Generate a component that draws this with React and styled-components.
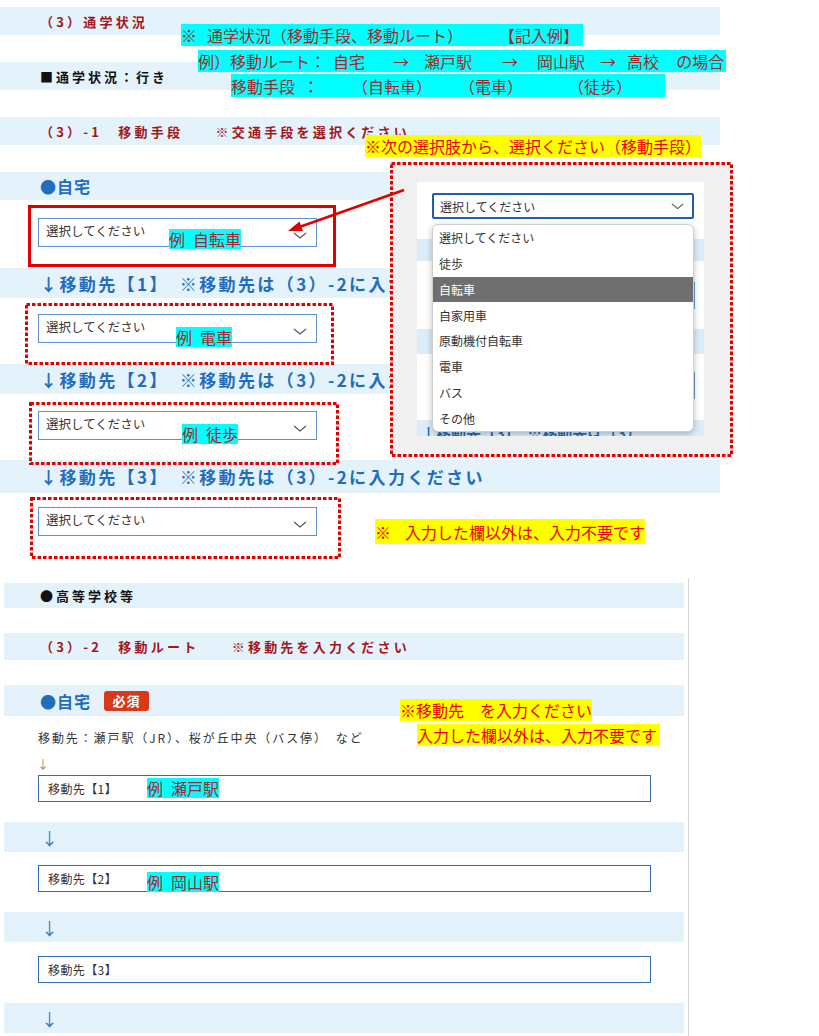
import styled, { createGlobalStyle } from "styled-components";

const GlobalStyle = createGlobalStyle`
  * { box-sizing: border-box; }
  body {
    margin: 0;
    background: #fff;
    font-family: "Noto Sans CJK JP", "Noto Sans", sans-serif;
    color: #333;
  }
`;

const Chevron = ({ w = 14 }) => (
  <svg width={w} height={w / 2} viewBox="0 0 14 7" fill="none">
    <path d="M1 1l6 5 6-5" stroke="#555" strokeWidth="1.2" />
  </svg>
);

// red frame drawn as square dashes like the annotated screenshot
const Frame = ({ x, y, w, h, solid }) => (
  <FrameBox $x={x} $y={y} $w={w} $h={h}>
    <svg width={w} height={h}>
      <rect
        x="1.5"
        y="1.5"
        width={w - 3}
        height={h - 3}
        fill="none"
        stroke="#e00000"
        strokeWidth="3"
        strokeDasharray={solid ? "none" : "3.5 2"}
      />
    </svg>
  </FrameBox>
);

const OPTIONS = ["選択してください", "徒歩", "自転車", "自家用車", "原動機付自転車", "電車", "バス", "その他"];

const App = () => {
  return (
    <Page>
      <GlobalStyle />

      <TopForm>
        <Band>
          <RedTitle>（3）通学状況</RedTitle>
        </Band>
        <Band $mt={27}>
          <PlainTitle>■通学状況：行き</PlainTitle>
        </Band>
        <Band $mt={27}>
          <RedTitle>（3）-1　移動手段　　※交通手段を選択ください</RedTitle>
        </Band>
        <Band $mt={27}>
          <BlueTitle>●自宅</BlueTitle>
        </Band>
        <SelectRow $pt={18} $pb={21}>
          <SelectBox>
            選択してください
            <Chevron />
          </SelectBox>
        </SelectRow>
        <Band $h={30}>
          <BlueTitle $wide>↓移動先【1】　※移動先は（3）-2に入力ください</BlueTitle>
        </Band>
        <SelectRow $pt={16} $pb={21}>
          <SelectBox>
            選択してください
            <Chevron />
          </SelectBox>
        </SelectRow>
        <Band $h={30}>
          <BlueTitle $wide>↓移動先【2】　※移動先は（3）-2に入力ください</BlueTitle>
        </Band>
        <SelectRow $pt={17} $pb={20}>
          <SelectBox>
            選択してください
            <Chevron />
          </SelectBox>
        </SelectRow>
        <Band $h={33}>
          <BlueTitle $wide>↓移動先【3】　※移動先は（3）-2に入力ください</BlueTitle>
        </Band>
        <SelectRow $pt={14} $pb={42}>
          <SelectBox>
            選択してください
            <Chevron />
          </SelectBox>
        </SelectRow>
      </TopForm>

      <LowerForm>
        <Band $h={25} $pl={36}>
          <PlainTitle>●高等学校等</PlainTitle>
        </Band>
        <Band $h={27} $mt={25} $pl={36}>
          <RedTitle>（3）-2　移動ルート　　※移動先を入力ください</RedTitle>
        </Band>
        <Band $h={31} $mt={25} $pl={36}>
          <BlueTitle>●自宅</BlueTitle>
          <Badge>必須</Badge>
        </Band>
        <Hint>移動先：瀬戸駅（JR）、桜が丘中央（バス停）　など</Hint>
        <SmallArrow>↓</SmallArrow>
        <RouteInput $mt={4}>移動先【1】</RouteInput>
        <ArrowBand $mt={20}>↓</ArrowBand>
        <RouteInput $mt={13}>移動先【2】</RouteInput>
        <ArrowBand $mt={20}>↓</ArrowBand>
        <RouteInput $mt={14}>移動先【3】</RouteInput>
        <ArrowBand $mt={20}>↓</ArrowBand>
      </LowerForm>

      <Popup>
        <InnerPanel>
          <PopSelect>
            選択してください
            <Chevron w={13} />
          </PopSelect>
          <GhostBand $mt={20} $h={22}>）</GhostBand>
          <GhostSelect $mt={21} />
          <GhostBand $mt={20} $h={25}>）</GhostBand>
          <GhostSelect $mt={18} />
          <GhostBand $mt={21} $h={24} $left>
            ↓移動先【3】　※移動先は（3）
          </GhostBand>
          <DropList>
            {OPTIONS.map((o) => (
              <DropItem key={o} $active={o === "自転車"}>
                {o}
              </DropItem>
            ))}
          </DropList>
        </InnerPanel>
        <Frame x={0} y={0} w={343} h={295} />
      </Popup>

      <Frame x={28} y={205} w={308} h={62} solid />
      <Frame x={25} y={303} w={309} h={62} />
      <Frame x={29} y={402} w={310} h={63} />
      <Frame x={30} y={497} w={311} h={62} />

      <Note $tone="cyan" $x={181} $y={24} $pr={4}>
        ※<Gap $w={10} />通学状況（移動手段、移動ルート）<Gap $w={36} />【記入例】
      </Note>
      <Note $tone="cyan" $x={198} $y={50} $pr={2}>
        例）移動ルート：<Gap $w={7} />自宅<Gap $w={28} />→<Gap $w={15} />瀬戸駅
        <Gap $w={30} />→<Gap $w={19} />岡山駅<Gap $w={15} />→<Gap $w={11} />高校
        <Gap $w={17} />の場合
      </Note>
      <Note $tone="cyan" $x={231} $y={74} $h={23} $pr={33}>
        移動手段<Gap $w={8} />：<Gap $w={33} />（自転車）<Gap $w={27} />（電車）
        <Gap $w={45} />（徒歩）
      </Note>
      <Note $tone="yellow" $x={365} $y={135}>
        ※次の選択肢から、選択ください（移動手段）
      </Note>

      <Note $tone="cyan" $x={169} $y={229} $h={20}>
        例<Gap $w={8} />自転車
      </Note>
      <Note $tone="cyan" $x={176} $y={327} $h={20}>
        例<Gap $w={8} />電車
      </Note>
      <Note $tone="cyan" $x={182} $y={424} $h={20}>
        例<Gap $w={8} />徒歩
      </Note>
      <Note $tone="yellow" $x={375} $y={519} $h={25}>
        ※<Gap $w={14} />入力した欄以外は、入力不要です
      </Note>

      <Note $tone="yellow" $x={400} $y={699}>
        ※移動先<Gap $w={16} />を入力ください
      </Note>
      <Note $tone="yellow" $x={417} $y={724} $pr={3}>
        入力した欄以外は、入力不要です
      </Note>
      <Note $tone="cyan" $x={147} $y={778} $h={20}>
        例<Gap $w={8} />瀬戸駅
      </Note>
      <Note $tone="cyan" $x={147} $y={872} $h={20}>
        例<Gap $w={8} />岡山駅
      </Note>

      <Pointer width="130" height="60" viewBox="0 0 130 60">
        <line x1="124" y1="10" x2="18" y2="47.5" stroke="#e00000" strokeWidth="2.5" />
        <polygon points="8,51 22.9,51 19.5,41.6" fill="#e00000" />
      </Pointer>
    </Page>
  );
};

export default App;

const Page = styled.div`
  position: relative;
  width: 819px;
  height: 1036px;
  overflow: hidden;
  background: #fff;
`;

const TopForm = styled.section`
  width: 720px;
  padding-top: 7px;
  display: flex;
  flex-direction: column;
`;

const LowerForm = styled.section`
  width: 689px;
  padding: 5px 4px 0;
  border-right: 1px solid #d4d4d4;
  height: 458px;
  display: flex;
  flex-direction: column;
`;

const Band = styled.div`
  height: ${(p) => p.$h || 28}px;
  margin-top: ${(p) => p.$mt || 0}px;
  padding-left: ${(p) => p.$pl ?? 40}px;
  background: #e4f2fc;
  display: flex;
  align-items: center;
  white-space: nowrap;
  overflow: hidden;
  flex-shrink: 0;
`;

const RedTitle = styled.span`
  color: #a3161a;
  font-size: 13px;
  font-weight: 700;
  letter-spacing: 3.2px;
`;

const PlainTitle = styled.span`
  color: #111;
  font-size: 13px;
  font-weight: 700;
  letter-spacing: 3px;
`;

const BlueTitle = styled.span`
  color: #1f6dbd;
  font-size: ${(p) => (p.$wide ? 17 : 16)}px;
  font-weight: 700;
  letter-spacing: ${(p) => (p.$wide ? 2.4 : 1)}px;
`;

const Badge = styled.span`
  margin-left: 13px;
  width: 45px;
  height: 20px;
  border-radius: 3px;
  background: #d9381a;
  color: #fff;
  font-size: 13px;
  font-weight: 700;
  display: flex;
  align-items: center;
  justify-content: center;
  letter-spacing: 1px;
`;

const SelectRow = styled.div`
  padding: ${(p) => p.$pt}px 0 ${(p) => p.$pb}px 38px;
`;

const SelectBox = styled.div`
  width: 279px;
  height: 29px;
  border: 1px solid #5b8fd0;
  background: #fff;
  padding: 3px 9px 0 7px;
  display: flex;
  justify-content: space-between;
  align-items: flex-start;
  font-size: 12.5px;
  line-height: 18px;
  color: #333;

  svg {
    margin-top: 10px;
  }
`;

const Hint = styled.div`
  margin: 14px 0 0 34px;
  font-size: 12px;
  line-height: 16px;
  letter-spacing: 1.9px;
  color: #333;
`;

const SmallArrow = styled.div`
  margin: 11px 0 0 33px;
  font-size: 12px;
  line-height: 14px;
  color: #888;
`;

const RouteInput = styled.div`
  margin: ${(p) => p.$mt}px 0 0 34px;
  width: 613px;
  height: 27px;
  flex-shrink: 0;
  border: 1px solid #2f6cb5;
  padding-left: 9px;
  display: flex;
  align-items: center;
  font-size: 12px;
  letter-spacing: 0.4px;
  color: #333;
`;

const ArrowBand = styled.div`
  margin-top: ${(p) => p.$mt}px;
  height: 30px;
  flex-shrink: 0;
  background: #e4f2fc;
  padding-left: 37px;
  display: flex;
  align-items: center;
  font-size: 17px;
  color: #3a7bc6;
`;

const Popup = styled.div`
  position: absolute;
  left: 390px;
  top: 162px;
  width: 343px;
  height: 295px;
  background: #f0f0f0;
  padding: 20px 29px 0 27px;
`;

const InnerPanel = styled.div`
  position: relative;
  height: 254px;
  background: #fff;
  overflow: hidden;
  padding: 11px 10px 0 15px;
`;

const PopSelect = styled.div`
  height: 26px;
  border: 2px solid #1c5fb0;
  border-radius: 2px;
  padding: 0 8px 0 6px;
  display: flex;
  align-items: center;
  justify-content: space-between;
  font-size: 12px;
  color: #333;
`;

const GhostBand = styled.div`
  margin: ${(p) => p.$mt}px -10px 0 -15px;
  height: ${(p) => p.$h}px;
  background: #dcecf8;
  display: flex;
  align-items: center;
  justify-content: ${(p) => (p.$left ? "flex-start" : "flex-end")};
  padding: 0 4px;
  color: #1f6dbd;
  font-size: 15px;
  font-weight: 700;
  white-space: nowrap;
`;

const GhostSelect = styled.div`
  margin: ${(p) => p.$mt}px -1px 0 0;
  height: 27px;
  border: 1px solid #6d9bd4;
`;

const DropList = styled.ul`
  position: absolute;
  left: 15px;
  top: 42px;
  width: 262px;
  margin: 0;
  padding: 0;
  list-style: none;
  background: #fff;
  border: 1px solid #cfcfcf;
  border-radius: 6px;
  overflow: hidden;
  box-shadow: 0 2px 6px rgba(0, 0, 0, 0.25);
`;

const DropItem = styled.li`
  height: 25.75px;
  padding-left: 6px;
  display: flex;
  align-items: center;
  font-size: 12px;
  color: ${(p) => (p.$active ? "#fff" : "#333")};
  background: ${(p) => (p.$active ? "#6f6f6f" : "transparent")};
`;

const FrameBox = styled.div`
  position: absolute;
  left: ${(p) => p.$x}px;
  top: ${(p) => p.$y}px;
  width: ${(p) => p.$w}px;
  height: ${(p) => p.$h}px;
  pointer-events: none;

  svg {
    display: block;
  }
`;

const Note = styled.span`
  position: absolute;
  left: ${(p) => p.$x}px;
  top: ${(p) => p.$y}px;
  height: ${(p) => p.$h || 22}px;
  padding-right: ${(p) => p.$pr || 0}px;
  display: flex;
  align-items: center;
  background: ${(p) => (p.$tone === "cyan" ? "#00ffff" : "#ffff00")};
  color: ${(p) => (p.$tone === "cyan" ? "#a0282a" : "#f00000")};
  font-size: 16px;
  white-space: nowrap;
`;

const Gap = styled.span`
  display: inline-block;
  width: ${(p) => p.$w}px;
  flex-shrink: 0;
`;

const Pointer = styled.svg`
  position: absolute;
  left: 280px;
  top: 180px;
  overflow: visible;
`;
